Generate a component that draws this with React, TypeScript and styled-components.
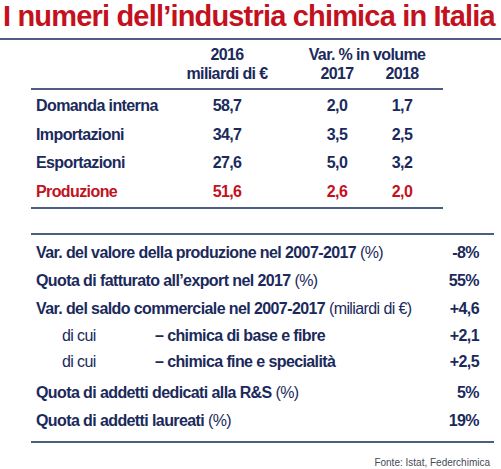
import { Fragment } from "react";
import styled, { createGlobalStyle } from "styled-components";

const GlobalStyle = createGlobalStyle`
    body {
        margin: 0;
        background: #ffffff;
        font-family: "Liberation Sans", Arial, sans-serif;
    }
`;

const NAVY = "#1b2a5c";
const RED = "#c3111d";
const RULE = "#4d5d84";

const Page = styled.div`
    width: 501px;
    height: 469px;
    overflow: hidden;
    color: ${NAVY};
`;

const Title = styled.h1`
    margin: 0;
    padding-left: 3px;
    font-size: 29px;
    line-height: 32px;
    font-weight: 700;
    letter-spacing: -0.82px;
    color: ${RED};
    white-space: nowrap;
`;

const TopRule = styled.div`
    height: 2px;
    margin-top: 6px;
    background: ${RULE};
`;

const Table = styled.div`
    margin-left: 31px;
    width: 412px;
    font-size: 16px;
    font-weight: 700;
    letter-spacing: -0.6px;
`;

const Grid = styled.div<{ $head?: boolean }>`
    display: grid;
    grid-template-columns: 151px 90px 100px 60px;
    line-height: ${(p) => (p.$head ? "19px" : "28.5px")};
    padding: ${(p) => (p.$head ? "5px 0" : "2px 0 1px")};
    border-bottom: 2px solid ${RULE};
`;

const Cell = styled.div<{ $left?: boolean; $shift?: boolean; $span?: boolean; $red?: boolean }>`
    text-align: ${(p) => (p.$left ? "left" : "center")};
    padding-left: ${(p) => (p.$left ? "5px" : p.$shift ? "30px" : "0")};
    grid-column: ${(p) => (p.$span ? "span 2" : "auto")};
    color: ${(p) => (p.$red ? RED : NAVY)};
    white-space: nowrap;
`;

const Summary = styled.div`
    margin: 24px 7px 0 31px;
    padding: 4px 15px 6px 5px;
    border-top: 2px solid ${RULE};
    border-bottom: 2px solid ${RULE};
    font-size: 16px;
    letter-spacing: -0.6px;
`;

const Row = styled.div<{ $sub?: boolean; $gap?: boolean }>`
    display: flex;
    align-items: baseline;
    line-height: ${(p) => (p.$sub ? "26px" : "28px")};
    margin-top: ${(p) => (p.$gap ? "4px" : "0")};
    white-space: nowrap;
`;

const Label = styled.span`
    flex: 1;
    font-weight: 700;
`;

const Unit = styled.span`
    font-weight: 400;
`;

const SubTag = styled.span`
    width: 93px;
    padding-left: 26px;
    font-weight: 400;
`;

const Value = styled.span`
    font-weight: 700;
    text-align: right;
`;

const Source = styled.div`
    margin-top: 14px;
    padding-right: 11px;
    text-align: right;
    font-size: 10px;
    line-height: 12px;
    color: #454a55;
`;

const rows = [
    { label: "Domanda interna", v: ["58,7", "2,0", "1,7"] },
    { label: "Importazioni", v: ["34,7", "3,5", "2,5"] },
    { label: "Esportazioni", v: ["27,6", "5,0", "3,2"] },
    { label: "Produzione", v: ["51,6", "2,6", "2,0"], red: true },
];

export default function App() {
    return (
        <Page>
            <GlobalStyle />
            <Title>I numeri dell’industria chimica in Italia</Title>
            <TopRule />
            <Table>
                <Grid $head>
                    <Cell />
                    <Cell>2016</Cell>
                    <Cell $shift $span>Var. % in volume</Cell>
                    <Cell />
                    <Cell>miliardi di €</Cell>
                    <Cell $shift>2017</Cell>
                    <Cell>2018</Cell>
                </Grid>
                <Grid>
                    {rows.map((r) => (
                        <Fragment key={r.label}>
                            <Cell $left $red={r.red}>{r.label}</Cell>
                            <Cell $red={r.red}>{r.v[0]}</Cell>
                            <Cell $shift $red={r.red}>{r.v[1]}</Cell>
                            <Cell $red={r.red}>{r.v[2]}</Cell>
                        </Fragment>
                    ))}
                </Grid>
            </Table>
            <Summary>
                <Row>
                    <Label>Var. del valore della produzione nel 2007-2017 <Unit>(%)</Unit></Label>
                    <Value>-8%</Value>
                </Row>
                <Row>
                    <Label>Quota di fatturato all’export nel 2017 <Unit>(%)</Unit></Label>
                    <Value>55%</Value>
                </Row>
                <Row>
                    <Label>Var. del saldo commerciale nel 2007-2017 <Unit>(miliardi di €)</Unit></Label>
                    <Value>+4,6</Value>
                </Row>
                <Row $sub>
                    <SubTag>di cui</SubTag>
                    <Label>– chimica di base e fibre</Label>
                    <Value>+2,1</Value>
                </Row>
                <Row $sub>
                    <SubTag>di cui</SubTag>
                    <Label>– chimica fine e specialità</Label>
                    <Value>+2,5</Value>
                </Row>
                <Row $gap>
                    <Label>Quota di addetti dedicati alla R&amp;S <Unit>(%)</Unit></Label>
                    <Value>5%</Value>
                </Row>
                <Row>
                    <Label>Quota di addetti laureati <Unit>(%)</Unit></Label>
                    <Value>19%</Value>
                </Row>
            </Summary>
            <Source>Fonte: Istat, Federchimica</Source>
        </Page>
    );
}
